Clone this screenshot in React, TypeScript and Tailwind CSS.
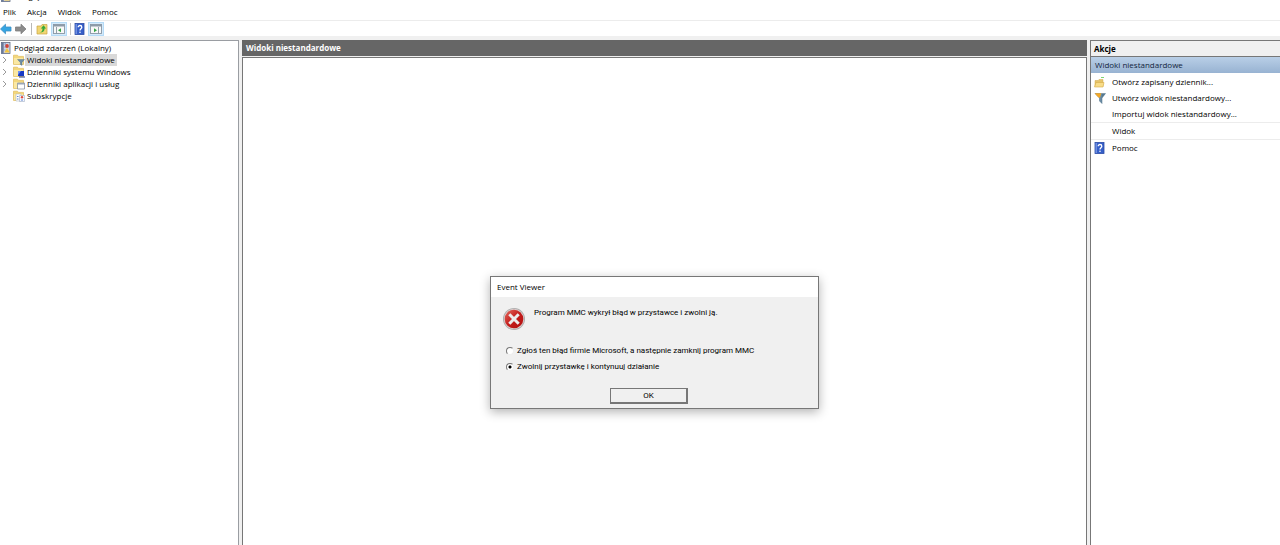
import React, { useState } from "react";

type IconProps = { className?: string };

function Book({ className = "size-3" }: IconProps) {
  return (
    <svg viewBox="0 0 12 12" className={className} aria-hidden="true">
      <rect x="1.5" y="0.5" width="8.500" height="11" fill="#cfd6e6" stroke="#5f6b84" strokeWidth="0.8" />
      <rect x="1.5" y="0.5" width="2.2" height="11" fill="#6a7a9a" />
      <circle cx="7" cy="4" r="1.900" fill="#d0443a" />
      <path d="M7 6 L9.800 10.600 H4.200 Z" fill="#f3c33b" />
      <path d="M4.500 2h1.500M4.500 5h1M4.500 8h.8" stroke="#4a6fc0" strokeWidth="0.8" />
    </svg>
  );
}

function Folder({ kind, className = "size-3" }: IconProps & { kind: string }) {
  return (
    <svg viewBox="0 0 12 12" className={className} aria-hidden="true">
      <path d="M0.500 1.200h4l1 1.200h5v8H0.500z" fill="#f3d77c" stroke="#dfba5a" strokeWidth="0.7" />
      <path d="M1 4h9v6H1z" fill="#fae8a4" />
      {kind === "filter" && <path d="M4.500 5.500h7L9 8.400v3L7.300 10.400V8.400z" fill="#6d8ca6" stroke="#4f7089" strokeWidth="0.4" />}
      {kind === "system" && (
        <>
          <path d="M5 5h6v5H5z" fill="#1739c5" />
          <path d="M5 5h3L5 9z" fill="#6d8ff2" />
          <path d="M6 11h6" stroke="#263b85" strokeWidth="1" />
        </>
      )}
      {kind === "apps" && (
        <>
          <path d="M4.500 5h7v6h-7z" fill="#ffffff" stroke="#7b8796" strokeWidth="0.7" />
          <path d="M4.500 5h7v1.500h-7z" fill="#9aa7b8" />
        </>
      )}
      {kind === "subs" && (
        <>
          <path d="M3 4h5v7H3z" fill="#ffffff" stroke="#a6adb8" strokeWidth="0.5" />
          <path d="M6.500 5.500h5v6h-5z" fill="#f4f7ff" stroke="#92a0b8" strokeWidth="0.5" />
          <circle cx="9" cy="7.300" r="1.200" fill="#e04a3c" />
          <path d="M4 6.500h1.500M4 9h1.500M8 10h2" stroke="#4d7bd0" strokeWidth="0.9" />
        </>
      )}
    </svg>
  );
}

function Arrow({ back }: { back?: boolean }) {
  return (
    <svg viewBox="0 0 12 12" className="size-3" aria-hidden="true">
      {back ? (
        <path d="M0.500 6 L5.500 1.200 V4 H11 V8 H5.500 V10.800 Z" fill="#35a5e2" stroke="#3f8fc4" strokeWidth="0.8" />
      ) : (
        <path d="M11 6 L6 1.200 V4 H0.500 V8 H6 V10.800 Z" fill="#8c8c8c" stroke="#7d7d7d" strokeWidth="0.8" />
      )}
    </svg>
  );
}

function UpFolder() {
  return (
    <svg viewBox="0 0 12 12" className="size-3" aria-hidden="true">
      <path d="M1 3h4l1-1.500h5V11H1z" fill="#f1d672" stroke="#c9a544" strokeWidth="0.7" />
      <path d="M3 9.500c2.500 0 3.500-1.500 3.500-4H4.800L7.600 2.200l2.500 3.300H8.600c0 3-2 4.500-5.600 4z" fill="#35a83a" />
    </svg>
  );
}

function Panes({ right }: { right?: boolean }) {
  return (
    <svg viewBox="0 0 12 12" className="size-3" aria-hidden="true">
      <rect x="0.500" y="1.500" width="11" height="9" fill="#f7f7f7" stroke="#8795a3" strokeWidth="0.9" />
      <path d="M0.500 1.500h11v2H.5z" fill="#8d9aa8" />
      <path d={right ? "M8.500 4v6.500" : "M3.500 4v6.500"} stroke="#8795a3" strokeWidth="0.9" />
      <path d={right ? "M4 5.200l3 2L4 9.200z" : "M8 5.200l-3 2 3 2z"} fill="#36a447" />
    </svg>
  );
}

function Help() {
  return (
    <svg viewBox="0 0 12 12" className="size-3" aria-hidden="true">
      <rect x="1" y="0.500" width="9" height="11" fill="#365fc9" stroke="#2b4ba6" strokeWidth="0.8" />
      <path d="M1.500 1H3v10H1.500z" fill="#6f8fe0" />
      <path d="M4.200 4.200c0-2.300 3.600-2.300 3.600 0 0 1.500-1.800 1.500-1.800 3.200" fill="none" stroke="#ffffff" strokeWidth="1.300" />
      <circle cx="6" cy="9.300" r="0.800" fill="#ffffff" />
    </svg>
  );
}

function OpenFolder() {
  return (
    <svg viewBox="0 0 12 12" className="size-3" aria-hidden="true">
      <path d="M1 4.500h3l1-1h4v7H1z" fill="#e6c46a" stroke="#d0a84c" strokeWidth="0.5" />
      <path d="M0.500 11L2 6.500H10L9 11z" fill="#f8dc88" stroke="#d5ab48" strokeWidth="0.6" />
      <path d="M7 1.500h3" stroke="#7fd672" strokeWidth="1" />
    </svg>
  );
}

function Funnel() {
  return (
    <svg viewBox="0 0 12 12" className="size-3" aria-hidden="true">
      <path d="M1 1.500h10.500L8 6v5.500L5.500 9V6z" fill="#6c8da6" stroke="#4b6c84" strokeWidth="0.500" />
      <path d="M0.800 1.200h6.500l-1.300 4.500-1.800-.5z" fill="#f5a825" />
      <path d="M8 2h3L7.500 6z" fill="#557992" />
    </svg>
  );
}

function ErrorIcon() {
  return (
    <svg viewBox="0 0 24 24" className="size-6 shrink-0" aria-hidden="true">
      <defs>
        <linearGradient id="red" x1="0" y1="0" x2="1" y2="1">
          <stop offset="0" stopColor="#e26a60" />
          <stop offset="0.500" stopColor="#c41d1b" />
          <stop offset="1" stopColor="#b00f10" />
        </linearGradient>
      </defs>
      <circle cx="12" cy="12" r="11" fill="#ababab" />
      <circle cx="12" cy="12" r="10.200" fill="#d9cccc" />
      <circle cx="12" cy="12" r="9.300" fill="url(#red)" />
      <path d="M7.300 7.300l9.400 9.400M16.700 7.300l-9.400 9.400" stroke="#ececec" strokeWidth="3" />
    </svg>
  );
}

const tree = [
  { label: "Widoki niestandardowe", kind: "filter", open: true, selected: true },
  { label: "Dzienniki systemu Windows", kind: "system", open: true },
  { label: "Dzienniki aplikacji i usług", kind: "apps", open: true },
  { label: "Subskrypcje", kind: "subs" },
];

function Action({ icon, label, line }: { icon?: React.ReactNode; label: string; line?: boolean }) {
  return (
    <li className={line ? "border-t border-[#ececec]" : ""}>
      <button className="flex h-4 w-full items-center gap-1.5 pl-[3px] text-left whitespace-nowrap">
        <span className="size-3 shrink-0">{icon}</span>
        {label}
      </button>
    </li>
  );
}

export default function App() {
  const [choice, setChoice] = useState("release");
  return (
    <div className="relative flex h-screen min-h-96 flex-col overflow-hidden bg-[#f0f0f0] font-['Open_Sans','Noto_Sans',sans-serif] text-[8px] leading-3 text-black">
      <header className="bg-white">
        <div className="flex h-1 items-end gap-0.5 overflow-hidden pb-0.5">
          <Book className="size-3 shrink-0" />
          <span>Podgląd zdarzeń</span>
        </div>
        <nav className="flex h-4 items-center gap-[11px] pl-[3px]">
          {["Plik", "Akcja", "Widok", "Pomoc"].map((m) => (
            <button key={m}>{m}</button>
          ))}
        </nav>
        <div className="flex h-4 items-center border-t border-[#ececec]">
          <button aria-label="Wstecz"><Arrow back /></button>
          <button aria-label="Dalej" className="ml-[3px]"><Arrow /></button>
          <span className="mx-1 h-3 w-px bg-[#b8b8b8]" />
          <button aria-label="W górę"><UpFolder /></button>
          <button aria-label="Drzewo" className="ml-[3px] border border-[#b5dbf7] bg-[#d5eafa] px-px"><Panes /></button>
          <span className="mx-[3px] h-3 w-px bg-[#c4c4c4]" />
          <button aria-label="Pomoc"><Help /></button>
          <button aria-label="Akcje" className="ml-0.5 border border-[#b5dbf7] bg-[#d5eafa] px-px"><Panes right /></button>
        </div>
      </header>

      <div className="flex min-h-0 flex-1 gap-[3px] pt-1">
        <aside className="w-[239px] shrink-0 border-t border-r border-[#9a9da2] bg-white pt-px">
          <div className="flex h-3 items-center gap-0.5">
            <Book />
            Podgląd zdarzeń (Lokalny)
          </div>
          <ul>
            {tree.map((t) => (
              <li key={t.label} className="flex h-3 items-center">
                <span className="flex w-[13px] pl-0.5">
                  {t.open && (
                    <svg viewBox="0 0 6 8" className="h-2 w-1.5" aria-hidden="true">
                      <path d="M1 1l3 3-3 3" fill="none" stroke="#9a9a9a" />
                    </svg>
                  )}
                </span>
                <Folder kind={t.kind} />
                <span className={t.selected ? "bg-[#d9d9d9] px-0.5" : "px-0.5"}>{t.label}</span>
              </li>
            ))}
          </ul>
        </aside>

        <main className="flex min-w-0 flex-1 flex-col">
          <h1 className="bg-[#666666] px-1 py-0.5 font-bold text-white">Widoki niestandardowe</h1>
          <div className="mt-px flex-1 border border-b-0 border-[#777777] bg-white" />
        </main>

        <aside className="w-[190px] shrink-0 border-t border-l border-[#777777] bg-white">
          <h2 className="border-b border-[#777777] bg-[#f0f0f0] px-[3px] pt-0.5 pb-px font-bold">Akcje</h2>
          <h3 className="bg-linear-to-b from-[#b9cfe7] to-[#98b3d2] px-1 py-0.5 text-[#12253d]">Widoki niestandardowe</h3>
          <ul className="pt-px text-black">
            <Action icon={<OpenFolder />} label="Otwórz zapisany dziennik..." />
            <Action icon={<Funnel />} label="Utwórz widok niestandardowy..." />
            <Action label="Importuj widok niestandardowy..." />
            <Action label="Widok" line />
            <Action icon={<Help />} label="Pomoc" line />
          </ul>
        </aside>
      </div>

      <div role="dialog" aria-labelledby="dialog-title" className="absolute top-[276px] left-[490px] w-[329px] border border-[#777777] bg-[#f0f0f0] font-['Roboto','Liberation_Sans',sans-serif] shadow-[0_3px_10px_rgba(0,0,0,0.3)]">
        <h2 id="dialog-title" className="bg-white px-1.5 py-1 font-['Open_Sans',sans-serif]">Event Viewer</h2>
        <div className="flex gap-2 px-[11px] pt-2.5">
          <ErrorIcon />
          <p>Program MMC wykrył błąd w przystawce i zwolni ją.</p>
        </div>
        <fieldset className="flex flex-col gap-1 px-[15px] pt-3.5">
          {[
            ["report", "Zgłoś ten błąd firmie Microsoft, a następnie zamknij program MMC"],
            ["release", "Zwolnij przystawkę i kontynuuj działanie"],
          ].map(([id, text]) => (
            <label key={id} className="flex items-center gap-[3px]">
              <input type="radio" name="mmc" checked={choice === id} onChange={() => setChoice(id)} className="size-2 appearance-none rounded-full border border-t-[#777777] border-r-[#eeeeee] border-b-[#eeeeee] border-l-[#777777] bg-white checked:bg-[radial-gradient(circle,#000_0_1px,#fff_2px)]" />
              {text}
            </label>
          ))}
        </fieldset>
        <div className="flex justify-center pt-[15px] pr-[11px] pb-1">
          <button className="h-4 w-[78px] border border-r-2 border-b-2 border-[#777777]">OK</button>
        </div>
      </div>
    </div>
  );
}
